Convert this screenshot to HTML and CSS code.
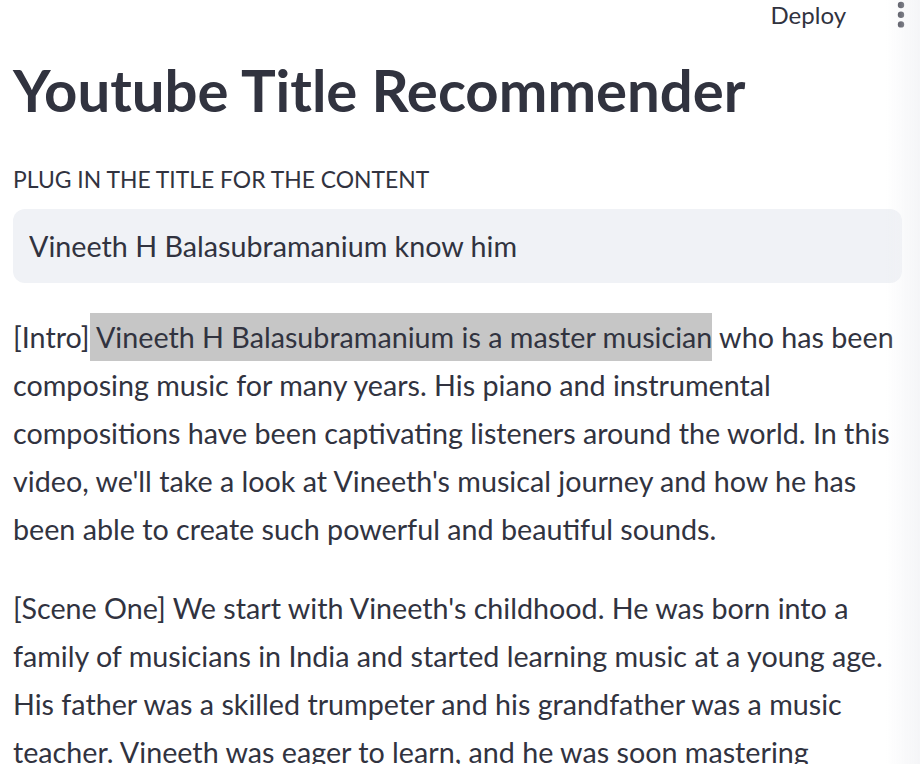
FILE: index.html
```html
<!DOCTYPE html>
<html lang="en">
<head>
<meta charset="utf-8">
<title>Youtube Title Recommender</title>
<link rel="stylesheet" href="styles.css">
</head>
<body>
<header class="topbar">
  <span class="deploy">Deploy</span>
  <svg class="menu" width="8" height="30" viewBox="0 0 8 30" aria-hidden="true">
    <circle cx="4" cy="5" r="3.2"/>
    <circle cx="4" cy="14.7" r="3.2"/>
    <circle cx="4" cy="24.4" r="3.2"/>
  </svg>
</header>
<main class="main">
  <h1 class="title">Youtube Title Recommender</h1>
  <label class="label" for="q">PLUG IN THE TITLE FOR THE CONTENT</label>
  <div class="field"><input id="q" class="input" type="text" value="Vineeth H Balasubramanium know him"></div>
  <p class="para">[Intro]<span class="hl">&nbsp;Vineeth H Balasubramanium is a master musician</span> who has been composing music for many years. His piano and instrumental compositions have been captivating listeners around the world. In this video, we'll take a look at Vineeth's musical journey and how he has been able to create such powerful and beautiful sounds.</p>
  <p class="para">[Scene One] We start with Vineeth's childhood. He was born into a family of musicians in India and started learning music at a young age. His father was a skilled trumpeter and his grandfather was a music teacher. Vineeth was eager to learn, and he was soon mastering</p>
</main>
<div class="edge" aria-hidden="true"></div>
</body>
</html>
```
FILE: styles.css
```css
html, body {
  margin: 0;
  padding: 0;
  background: #ffffff;
  overflow: hidden;
}
body {
  font-family: "Lato", "Source Sans Pro", sans-serif;
  color: #31333f;
}
.topbar {
  height: 40px;
  display: flex;
  justify-content: flex-end;
  align-items: flex-start;
  padding-right: 15px;
}
.deploy {
  font-size: 24px;
  line-height: 30px;
  margin-right: 51px;
}
.menu {
  fill: #31333f;
}
.main {
  padding: 0 18px 0 13px;
  display: flex;
  flex-direction: column;
}
.title {
  margin: 15px 0 0 0;
  font-size: 58.1px;
  line-height: 70px;
  font-weight: 700;
}
.label {
  margin-top: 39px;
  font-size: 22.9px;
  line-height: 30px;
}
.field {
  margin-top: 15px;
  height: 74px;
  background: #f0f2f6;
  border-radius: 12px;
  display: flex;
  align-items: center;
  padding: 0 16px;
}
.input {
  flex: 1;
  border: 0;
  outline: 0;
  background: transparent;
  font-family: inherit;
  font-size: 28.7px;
  line-height: 48px;
  height: 48px;
  padding: 0;
  color: #31333f;
}
.para {
  margin: 30px 0 0 0;
  font-size: 28.7px;
  line-height: 48px;
}
.para + .para {
  margin-top: 31px;
}
.hl {
  display: inline-block;
  background: #c6c6c6;
  line-height: 48px;
  vertical-align: top;
}
.edge {
  position: fixed;
  top: 0;
  right: 0;
  width: 34px;
  height: 100%;
  pointer-events: none;
  background: linear-gradient(to right, rgba(241, 242, 245, 0), rgba(241, 242, 245, 0.75));
}
```
